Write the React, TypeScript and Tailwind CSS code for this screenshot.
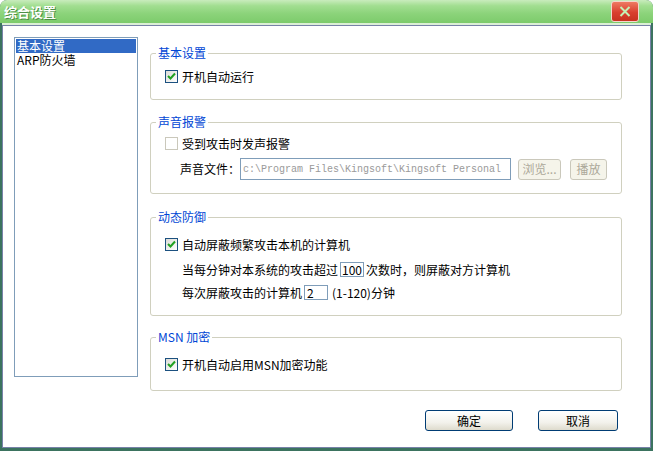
import type { ReactNode } from 'react';

function Check({ checked, disabled }: { checked?: boolean; disabled?: boolean }) {
  return (
    <span
      className={
        disabled
          ? 'w-[13px] h-[13px] shrink-0 border border-[#cac8bb] bg-white flex items-center justify-center'
          : 'w-[13px] h-[13px] shrink-0 border border-[#1c5180] bg-[linear-gradient(135deg,#dcdcd7,#ffffff)] flex items-center justify-center'
      }
    >
      {checked && (
        <svg width="9" height="9" viewBox="0 0 9 9">
          <path d="M1 4 L3.5 6.5 L8 1.5" stroke="#21a121" strokeWidth="2" fill="none" />
        </svg>
      )}
    </span>
  );
}

function Group({ title, className, children }: { title: string; className: string; children: ReactNode }) {
  return (
    <div className={`relative border border-[#d0d0bf] rounded-[3px] ${className}`}>
      <span className="absolute left-[5px] top-[-8px] px-[2px] bg-white text-[#0046d5] leading-[14px] whitespace-nowrap">
        {title}
      </span>
      {children}
    </div>
  );
}

export default function App() {
  return (
    <div className="w-[653px] h-[451px] flex flex-col bg-[#3b735f] rounded-t-[7px] overflow-hidden text-[12px] text-black font-['Noto_Sans_CJK_SC',sans-serif]">
      {/* title bar */}
      <div className="h-[23px] shrink-0 flex items-start justify-between bg-[linear-gradient(to_bottom,#c9ecbd_0%,#a2de91_25%,#8bd37a_60%,#7dcb6b_100%)]">
        <span className="pl-[4px] pt-[4px] text-white font-bold text-[13px] leading-[15px] [text-shadow:1px_1px_0_#4d8f45]">
          综合设置
        </span>
        <div className="mt-[1px] mr-[14px] w-[28px] h-[21px] rounded-[3px] border border-[#f4d6cc] bg-[linear-gradient(to_bottom,#ee7a62,#d9402e_55%,#c8321f)] flex items-center justify-center">
          <svg width="12" height="11" viewBox="0 0 12 11">
            <path d="M1.5 1 L10.5 10 M10.5 1 L1.5 10" stroke="#c4f2b4" strokeWidth="2" />
          </svg>
        </div>
      </div>

      {/* client frame */}
      <div className="flex-1 flex flex-col px-[2px] pb-[3px]">
        <div className="h-[2px] bg-[#dcefd6]" />
        <div className="flex-1 border border-[#7782a8] bg-white flex items-start pt-[11px] pl-[11px]">
          {/* category list */}
          <div className="w-[124px] h-[340px] border border-[#7f9db9] p-[1px] flex flex-col">
            <div className="h-[14px] bg-[#316ac5] text-white leading-[14px] pl-[1px]">基本设置</div>
            <div className="h-[14px] leading-[14px] pl-[1px]">ARP防火墙</div>
          </div>

          {/* settings */}
          <div className="ml-[12px] w-[472px] flex flex-col">
            <Group title="基本设置" className="mt-[16px] h-[47px] pt-[16px] pl-[14px]">
              <div className="flex items-center h-[13px] gap-[4px]">
                <Check checked />
                <span className="leading-[14px]">开机自动运行</span>
              </div>
            </Group>

            <Group title="声音报警" className="mt-[22px] h-[72px] pt-[14px] pl-[14px]">
              <div className="flex items-center h-[13px] gap-[4px]">
                <Check disabled />
                <span className="leading-[14px]">受到攻击时发声报警</span>
              </div>
              <div className="mt-[8px] ml-[15px] flex items-center h-[22px]">
                <span className="leading-[14px] w-[60px] whitespace-nowrap">声音文件：</span>
                <div className="w-[271px] h-[22px] border border-[#7f9db9] bg-white flex items-center pl-[2px] overflow-hidden whitespace-nowrap font-['Liberation_Mono',monospace] text-[10px] text-[#9a9a9a]">
                  c:\Program Files\Kingsoft\Kingsoft Personal
                </div>
                <div className="ml-[7px] w-[43px] h-[21px] rounded-[3px] border border-[#cac8bb] bg-[#f5f4ea] text-[#aca899] flex items-center justify-center">
                  浏览...
                </div>
                <div className="ml-[9px] w-[37px] h-[21px] rounded-[3px] border border-[#cac8bb] bg-[#f5f4ea] text-[#aca899] flex items-center justify-center">
                  播放
                </div>
              </div>
            </Group>

            <Group title="动态防御" className="mt-[23px] h-[99px] pt-[20px] pl-[14px]">
              <div className="flex items-center h-[13px] gap-[4px]">
                <Check checked />
                <span className="leading-[14px]">自动屏蔽频繁攻击本机的计算机</span>
              </div>
              <div className="mt-[11px] ml-[17px] flex items-center h-[15px] whitespace-nowrap">
                <span className="w-[158px]">当每分钟对本系统的攻击超过</span>
                <div className="w-[24px] h-[15px] border border-[#7f9db9] flex items-center pl-[1px] leading-[13px]">100</div>
                <span className="ml-[2px]">次数时，则屏蔽对方计算机</span>
              </div>
              <div className="mt-[8px] ml-[17px] flex items-center h-[15px] whitespace-nowrap">
                <span className="w-[122px]">每次屏蔽攻击的计算机</span>
                <div className="w-[24px] h-[15px] border border-[#7f9db9] flex items-center pl-[2px] leading-[13px]">2</div>
                <span className="ml-[4px]">(1-120)分钟</span>
              </div>
            </Group>

            <Group title="MSN 加密" className="mt-[21px] h-[54px] pt-[20px] pl-[14px]">
              <div className="flex items-center h-[13px] gap-[4px]">
                <Check checked />
                <span className="leading-[14px]">开机自动启用MSN加密功能</span>
              </div>
            </Group>

            <div className="mt-[19px] mr-[4px] flex justify-end gap-[25px]">
              <button className="w-[88px] h-[21px] rounded-[3px] border border-[#003c74] bg-[linear-gradient(to_bottom,#ffffff,#f3f2ec_60%,#dedbcd)] flex items-center justify-center leading-[14px]">
                确定
              </button>
              <button className="w-[80px] h-[21px] rounded-[3px] border border-[#003c74] bg-[linear-gradient(to_bottom,#ffffff,#f3f2ec_60%,#dedbcd)] flex items-center justify-center leading-[14px]">
                取消
              </button>
            </div>
          </div>
        </div>
      </div>
    </div>
  );
}
